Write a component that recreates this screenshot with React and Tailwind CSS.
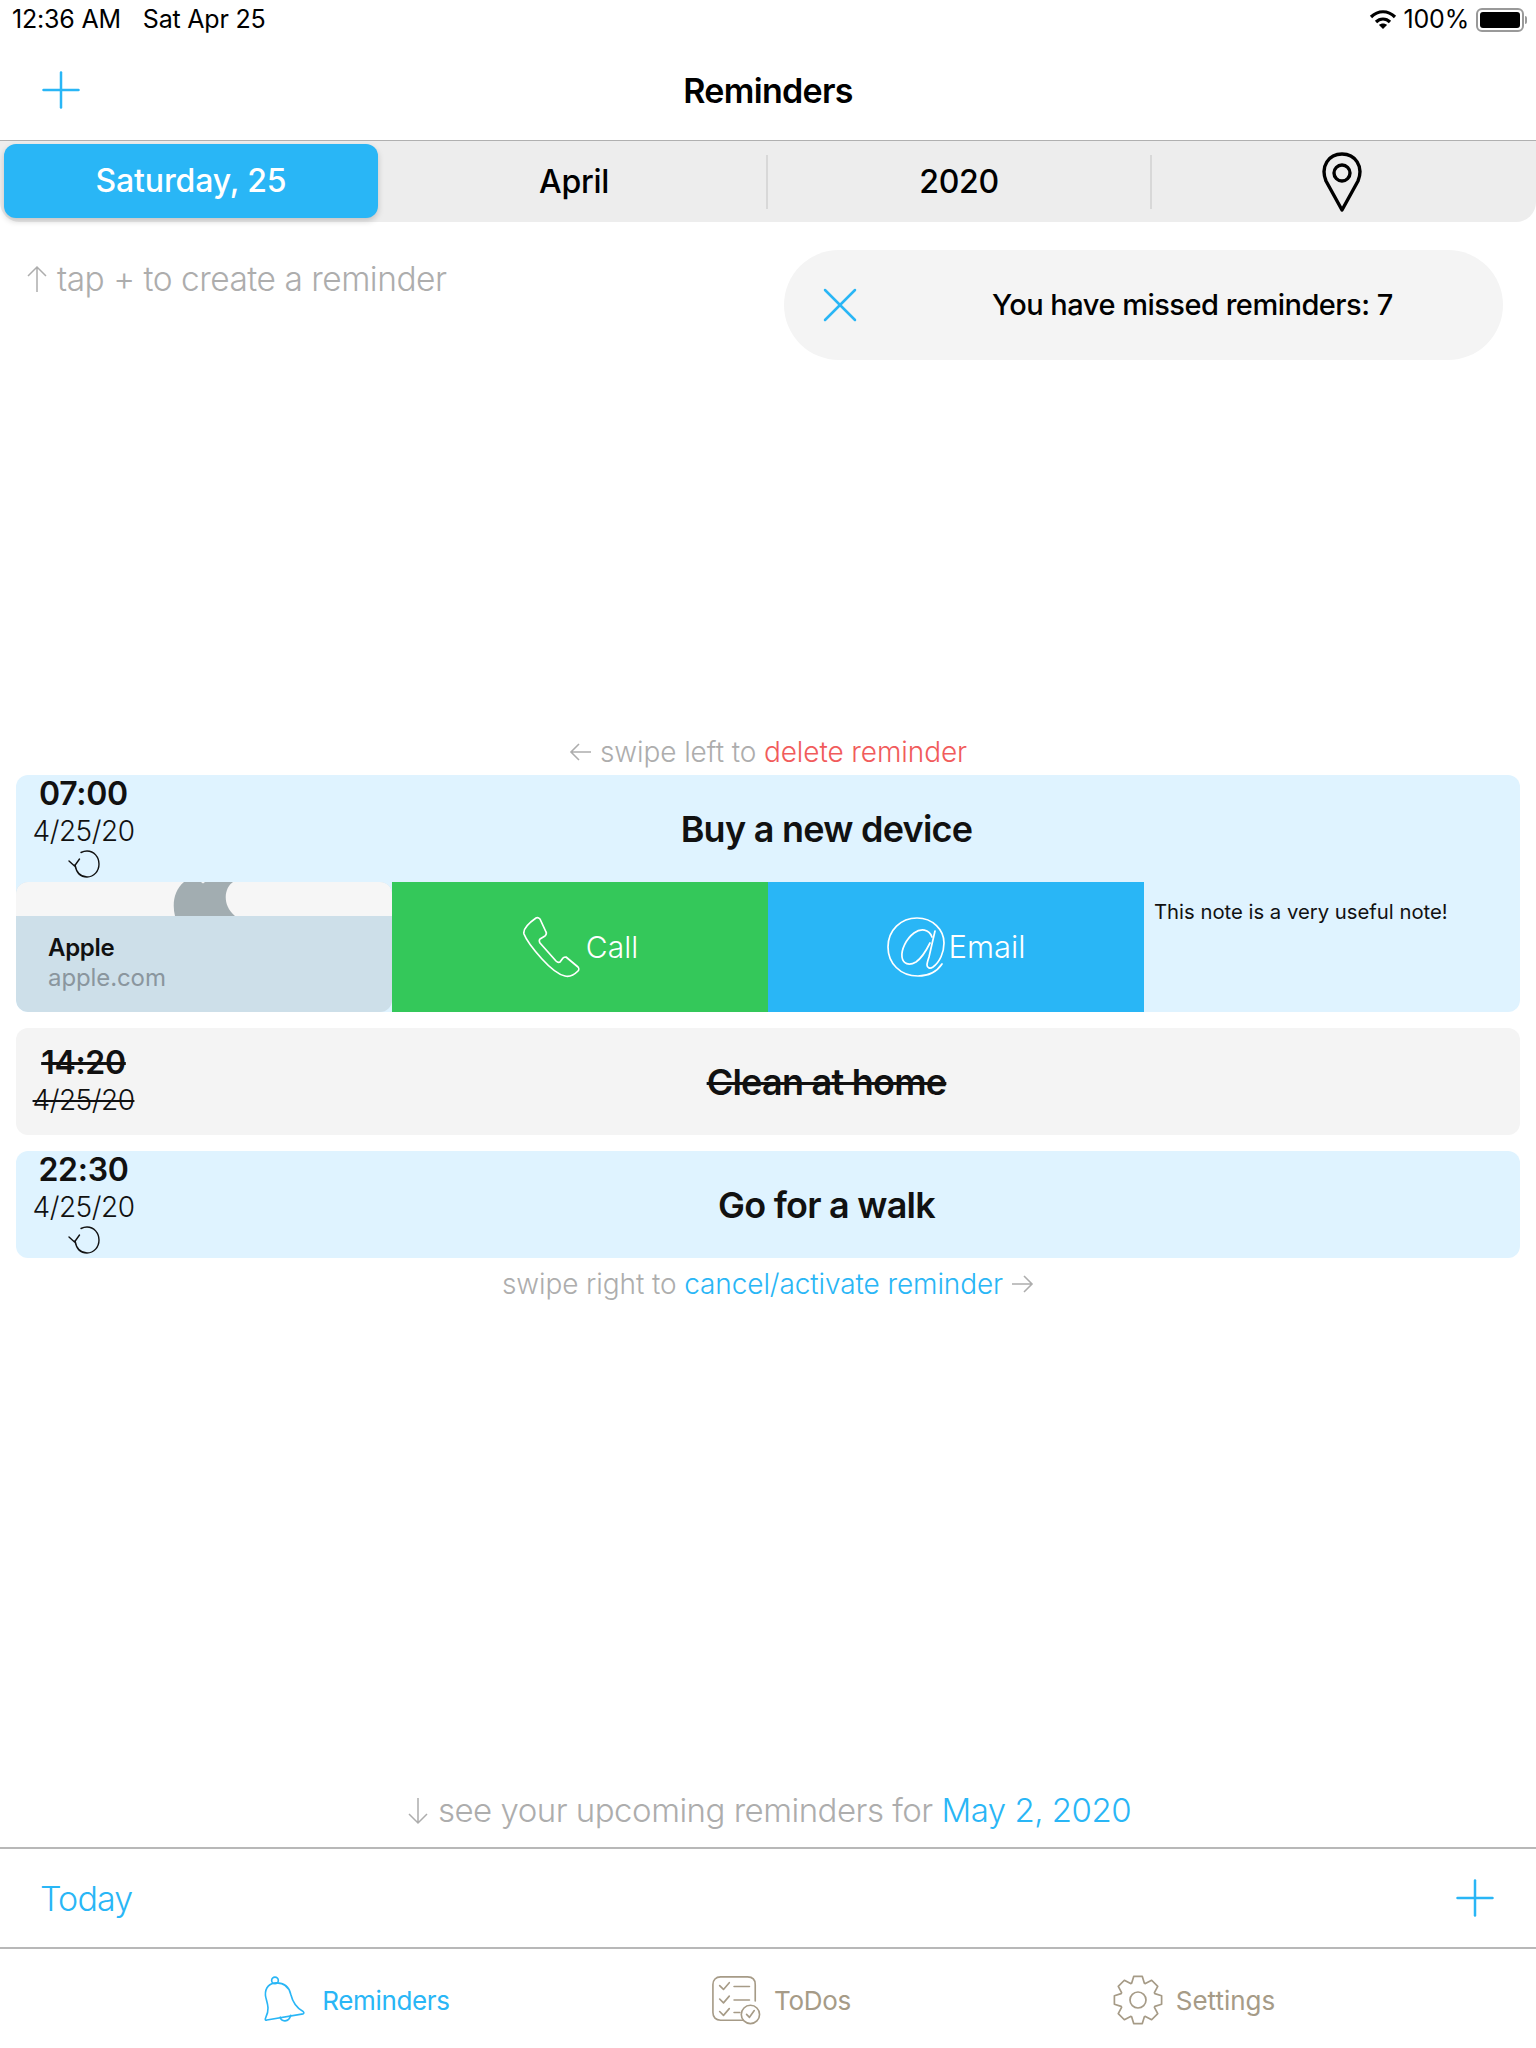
import React from 'react';
import { Plus, X } from 'lucide-react';

const BLUE = '#29b6f6';

const gearPath = () => {
  const pts = [];
  const teeth = 8;
  for (let i = 0; i < teeth; i++) {
    const a = (i * Math.PI * 2) / teeth - Math.PI / 2;
    const step = Math.PI / teeth;
    [
      [18, -step * 0.92],
      [24, -step * 0.46],
      [24, step * 0.46],
      [18, step * 0.92],
    ].forEach(([r, off]) => {
      pts.push(`${(25 + r * Math.cos(a + off)).toFixed(2)} ${(25 + r * Math.sin(a + off)).toFixed(2)}`);
    });
  }
  return 'M' + pts.join('L') + 'Z';
};

const RepeatIcon = () => (
  <svg viewBox="0 0 32 28" className="w-[32px] h-[28px] -mt-[1px]" fill="none" stroke="#111" strokeWidth="1.4" strokeLinecap="round" strokeLinejoin="round">
    <path d="M13 2.5 C15 1.5 17 1 19 1 C26 1 31 7 31 14 C31 21 26 27 19 27 C13 27 8.5 23 7 15" />
    <path d="M1 11 L6.5 16 L11.5 9" />
  </svg>
);

const PhoneIcon = () => (
  <svg viewBox="0 0 60 62" className="w-[60px] h-[62px]" fill="none" stroke="#fff" strokeWidth="1.7" strokeLinejoin="round">
    <path d="M2 18 C1 14 4 9 14 2 C16 1 17 2 18 3 L24 16 C25 18 24 19 23 20 L18 23 C17 24 17 25 18 27 L34 45 C35 46 36 47 38 46 L41 42 C42 41 43 41 44 41 L56 51 C57 52 57 54 56 55 C52 59 47 61 43 60 C38 59 30 54 20 43 C11 33 5 26 2 18Z" />
  </svg>
);

const AtIcon = () => (
  <svg viewBox="0 0 60 62" className="w-[60px] h-[62px]" fill="none" stroke="#fff" strokeWidth="1.7" strokeLinecap="round" strokeLinejoin="round">
    <path d="M56 48 C50 57 41 60 32 60 C14 60 2 47 2 31 C2 14 15 2 31 2 C47 2 58 14 58 27 C58 36 54 46 47 51 C44 53 41 52 41 49 C41 47 42 44 43 41 L49 15" />
    <path d="M46 21 C43 13 35 12 28 17 C20 23 15 34 16 41 C17 48 23 50 30 46 C36 42 41 33 44 27" />
  </svg>
);

const BellIcon = () => (
  <svg viewBox="0 0 44 52" className="w-[42px] h-[50px]" fill="none" stroke={BLUE} strokeWidth="1.7" strokeLinejoin="round" strokeLinecap="round">
    <circle cx="11.5" cy="5.5" r="3.5" />
    <path d="M3 47 C1 48 1 46 2 44 C7 34 2 27 1.5 21 C1 13 6 8 13 8 C21 8 26 11 28 20 C30 28 33 34 41 38 C42 39 42 40 41 40.5Z" />
    <path d="M17 44 C18 49 26 50 28 42" />
  </svg>
);

const TodoIcon = () => (
  <svg viewBox="0 0 52 52" className="w-[50px] h-[50px]" fill="none" stroke="#a69b87" strokeWidth="1.7" strokeLinecap="round" strokeLinejoin="round">
    <path d="M34 47 H10 C5 47 2 44 2 39 V10 C2 5 5 2 10 2 H38 C43 2 46 5 46 10 V27" />
    <path d="M9 11 L13 15 L19 8" />
    <path d="M9 25 L13 29 L19 22" />
    <path d="M9 38 L13 42 L19 35" />
    <path d="M24 12 H40" />
    <path d="M24 26 H40" />
    <path d="M24 39 H30" />
    <circle cx="41" cy="41" r="9.5" fill="#fff" />
    <path d="M37 41 L40 44 L45 37" />
  </svg>
);

const GearIcon = () => (
  <svg viewBox="0 0 50 50" className="w-[50px] h-[50px]" fill="none" stroke="#a69b87" strokeWidth="1.7" strokeLinejoin="round">
    <path d={gearPath()} />
    <circle cx="25" cy="25" r="8" />
  </svg>
);

const DateCol = ({ time, repeat, done }) => (
  <div className={`w-[135px] shrink-0 flex flex-col items-center text-[#111] ${repeat ? 'pt-[2px]' : 'justify-center pt-[3px]'} ${done ? 'line-through' : ''}`}>
    <div className="text-[32px] leading-[34px] font-semibold tracking-[-0.3px]">{time}</div>
    <div className="text-[28px] leading-[40px] font-light tracking-[-0.5px]">4/25/20</div>
    {repeat && <RepeatIcon />}
  </div>
);

const Title = ({ done, children }) => (
  <div className={`flex-1 flex items-center justify-center pr-[18px] text-[36px] font-semibold tracking-[-0.75px] text-[#111] ${done ? 'line-through' : ''}`}>
    {children}
  </div>
);

const Reminder = ({ time, repeat, done, title }) => (
  <div className={`flex h-[107px] rounded-xl ${done ? 'bg-[#f4f4f4]' : 'bg-[#dff3ff]'}`}>
    <DateCol time={time} repeat={repeat} done={done} />
    <Title done={done}>{title}</Title>
  </div>
);

export default function App() {
  return (
    <div className="w-[1536px] h-[2048px] bg-white flex flex-col overflow-hidden font-['Inter',sans-serif] text-black">
      {/* status bar */}
      <div className="h-10 flex items-center justify-between pl-3 pr-[9px] text-[25px] tracking-[-0.2px]">
        <div className="flex gap-[22px]">
          <span>12:36 AM</span>
          <span>Sat Apr 25</span>
        </div>
        <div className="flex items-center gap-[7px]">
          <svg viewBox="0 0 28 22" className="w-[28px] h-[22px]" fill="none" stroke="#000" strokeWidth="3.2">
            <path d="M2 8 C9 1 19 1 26 8" />
            <path d="M7 13 C11 9 17 9 21 13" />
            <path d="M14 20 L10 16 C12 14 16 14 18 16Z" fill="#000" stroke="none" />
          </svg>
          <span>100%</span>
          <div className="flex items-center gap-[1px]">
            <div className="w-[48px] h-[24px] rounded-[6px] border-2 border-[#999] p-[2px]">
              <div className="w-full h-full bg-black rounded-[3px]" />
            </div>
            <div className="w-[2px] h-[8px] bg-[#999] rounded-r" />
          </div>
        </div>
      </div>

      {/* nav */}
      <div className="relative h-[101px] shrink-0 border-b border-[#b0b0b0] flex items-center justify-center">
        <Plus className="absolute left-[31px] top-[20px] w-[60px] h-[60px]" color={BLUE} strokeWidth={1} />
        <span className="text-[34px] font-semibold tracking-[-0.7px]">Reminders</span>
      </div>

      {/* date picker */}
      <div className="h-[81px] shrink-0 bg-[#ededed] rounded-b-[20px] flex items-center text-[32px] font-medium px-1 tracking-[-0.3px]">
        <div className="w-[374px] h-[74px] -mt-px rounded-xl bg-[#29b6f6] text-white flex items-center justify-center shadow-[0_3px_6px_rgba(0,0,0,0.18)] tracking-[-0.15px]">
          Saturday, 25
        </div>
        <div className="w-[390px] h-[54px] pl-1 flex items-center justify-center border-r-2 border-[#d8d8d8]">April</div>
        <div className="w-[384px] h-[54px] flex items-center justify-center border-r-2 border-[#d8d8d8]">2020</div>
        <div className="flex-1 flex items-center justify-center">
          <svg viewBox="0 0 42 60" className="w-[42px] h-[60px]" fill="none" stroke="#000" strokeWidth="3.4">
            <path d="M21 58 L5 29 C-1 14 8 2 21 2 C34 2 43 14 37 29Z" strokeLinejoin="round" />
            <circle cx="21" cy="21" r="8" />
          </svg>
        </div>
      </div>

      {/* hint + missed banner */}
      <div className="flex items-start justify-between pl-[26px] pr-[33px] pt-[28px]">
        <div className="flex items-center gap-[9px] text-[33.5px] font-light text-[#adadad] tracking-[-0.5px] mt-[3px] h-[52px]">
          <svg viewBox="0 0 22 28" className="w-[22px] h-[28px]" fill="none" stroke="#adadad" strokeWidth="1.5">
            <path d="M11 27 V2 M2 11 L11 2 L20 11" />
          </svg>
          <span>tap + to create a reminder</span>
        </div>
        <div className="w-[719px] h-[110px] rounded-[55px] bg-[#f4f4f4] flex items-center">
          <X className="ml-[26px] w-[60px] h-[60px] shrink-0" color={BLUE} strokeWidth={1} />
          <span className="ml-[122px] text-[29px] font-medium tracking-[-0.5px]">You have missed reminders: 7</span>
        </div>
      </div>

      {/* reminders */}
      <div className="mt-[368px] flex items-center justify-center h-[47px] text-[28px] font-light text-[#adadad] tracking-[-0.1px] gap-[9px]">
        <svg viewBox="0 0 22 18" className="w-[22px] h-[18px]" fill="none" stroke="#adadad" strokeWidth="1.6">
          <path d="M22 9 H2 M10 1 L2 9 L10 17" />
        </svg>
        <span>swipe left to <span className="text-[#f15b5b]">delete reminder</span></span>
      </div>

      <div className="mx-4 flex flex-col gap-4">
        <div className="h-[237px] rounded-xl bg-[#dff3ff] overflow-hidden flex flex-col">
          <div className="flex h-[107px] shrink-0">
            <DateCol time="07:00" repeat />
            <Title>Buy a new device</Title>
          </div>
          <div className="flex flex-1">
            <div className="w-[376px] rounded-xl overflow-hidden flex flex-col bg-[#cddfe9]">
              <div className="h-[34px] bg-[#f6f6f6] flex justify-center overflow-hidden">
                <svg viewBox="0 0 62 34" className="w-[62px] h-[34px]">
                  <path d="M2 34 C-1 22 1 8 11 0 H28 L30 1.5 L32 0 H60 C52 5 48 22 62 34Z" fill="#a2adb1" />
                </svg>
              </div>
              <div className="flex-1 pl-[32px] pt-[17px]">
                <div className="text-[24px] leading-[30px] font-semibold tracking-[-0.3px] text-[#111]">Apple</div>
                <div className="text-[24px] leading-[30px] text-[#8a969e] tracking-[-0.1px]">apple.com</div>
              </div>
            </div>
            <div className="w-[376px] bg-[#34c85a] flex items-center justify-center gap-[4px] text-white text-[30px] font-light">
              <PhoneIcon />
              <span>Call</span>
            </div>
            <div className="w-[376px] bg-[#29b6f6] flex items-center justify-center gap-[2px] text-white text-[31px] font-light">
              <AtIcon />
              <span>Email</span>
            </div>
            <div className="flex-1 pl-[10px] pt-[15px] text-[20.3px] leading-[30px] text-[#111]">
              This note is a very useful note!
            </div>
          </div>
        </div>

        <Reminder time="14:20" done title="Clean at home" />
        <Reminder time="22:30" repeat title="Go for a walk" />
      </div>

      <div className="h-[52px] flex items-center justify-center text-[28px] font-light text-[#adadad] tracking-[-0.1px] gap-[9px]">
        <span>swipe right to <span className="text-[#29b6f6]">cancel/activate reminder</span></span>
        <svg viewBox="0 0 22 18" className="w-[22px] h-[18px]" fill="none" stroke="#adadad" strokeWidth="1.6">
          <path d="M0 9 H20 M12 1 L20 9 L12 17" />
        </svg>
      </div>

      {/* upcoming */}
      <div className="flex-1 flex items-end justify-center pb-[10px] pl-[2px]">
        <div className="flex items-center gap-[9px] text-[33px] font-light text-[#adadad] tracking-[-0.5px] h-[52px]">
          <svg viewBox="0 0 22 28" className="w-[22px] h-[28px]" fill="none" stroke="#adadad" strokeWidth="1.5">
            <path d="M11 1 V26 M2 17 L11 26 L20 17" />
          </svg>
          <span>see your upcoming reminders for <span className="text-[#29b6f6]">May 2, 2020</span></span>
        </div>
      </div>

      {/* toolbar */}
      <div className="h-[102px] shrink-0 border-y-2 border-[#b8b8b8] flex items-center justify-between pl-[40px] pr-[31px]">
        <span className="text-[34px] font-light text-[#29b6f6] tracking-[-0.85px]">Today</span>
        <Plus className="w-[60px] h-[60px]" color={BLUE} strokeWidth={1} />
      </div>

      {/* tab bar */}
      <div className="h-[99px] shrink-0 mx-[147px] grid grid-cols-3 pt-[3px]">
        <div className="flex items-center justify-center gap-[16px] text-[26px] text-[#29b6f6] tracking-[-0.35px] pl-[6px]">
          <BellIcon />
          <span>Reminders</span>
        </div>
        <div className="flex items-center justify-center gap-[13px] text-[26px] text-[#a69b87] tracking-[-0.3px] pl-[26px]">
          <TodoIcon />
          <span>ToDos</span>
        </div>
        <div className="flex items-center justify-center gap-[13px] text-[26px] text-[#a69b87] tracking-[0px] pl-[24px]">
          <GearIcon />
          <span>Settings</span>
        </div>
      </div>
    </div>
  );
}
